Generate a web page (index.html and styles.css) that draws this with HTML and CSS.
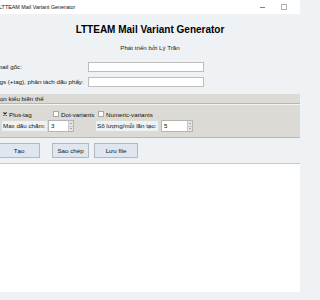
FILE: index.html
```html
<!DOCTYPE html>
<html>
<head>
<meta charset="utf-8">
<link rel="stylesheet" href="styles.css">
</head>
<body>
<div class="titlebar">
  <span class="title">LTTEAM Mail Variant Generator</span>
  <span class="controls"><span class="min"></span><span class="max"></span></span>
</div>
<main class="app">
  <h1 class="heading">LTTEAM Mail Variant Generator</h1>
  <p class="sub">Phát triển bởi Lý Trần</p>
  <div class="form">
    <label class="flabel">Email gốc:</label>
    <div class="entry"></div>
    <label class="flabel">Tags (+tag), phân tách dấu phẩy:</label>
    <div class="entry"></div>
  </div>
  <section class="group">
    <div class="legend">Chọn kiểu biến thể</div>
    <div class="inner">
      <div class="checks">
        <span class="opt opt-plus"><svg class="tick" width="4" height="4" viewBox="0 0 4 4"><path d="M0.4 0.4 L3.6 3.6 M3.6 0.4 L0.4 3.6" stroke="#222" stroke-width="1.1" fill="none"/></svg>Plus-tag</span>
        <span class="opt opt-dot"><span class="box"></span>Dot-variants</span>
        <span class="opt"><span class="box"></span>Numeric-variants</span>
      </div>
      <div class="spins">
        <span class="slabel slabel1">Max dấu chấm:</span>
        <span class="spin spin1"><span class="val">3</span><span class="arrows"><span class="up"></span><span class="down"></span></span></span>
        <span class="slabel slabel2">Số lượng/mỗi lần tạo:</span>
        <span class="spin spin2"><span class="val">5</span><span class="arrows"><span class="up"></span><span class="down"></span></span></span>
      </div>
    </div>
  </section>
  <div class="buttons">
    <button class="btn btn-create">Tạo</button>
    <button class="btn btn-copy">Sao chép</button>
    <button class="btn btn-save">Lưu file</button>
  </div>
  <div class="output"></div>
  <div class="footer"></div>
</main>
</body>
</html>
```
FILE: styles.css
```css
html, body {
  margin: 0;
  padding: 0;
  width: 300px;
  height: 300px;
  overflow: hidden;
  background: #eff2f5;
  font-family: "Liberation Sans", Arial, sans-serif;
  color: #111;
}
.titlebar {
  height: 14px;
  background: #ffffff;
  display: flex;
  align-items: center;
  justify-content: space-between;
}
.title {
  font-size: 5.4px;
  margin-left: -1px;
  color: #111;
}
.controls {
  display: flex;
  align-items: center;
  margin-right: 13px;
}
.min {
  width: 5px;
  height: 1px;
  background: #808080;
  margin-right: 16px;
}
.max {
  width: 4px;
  height: 4px;
  border: 1px solid #b0b0b0;
}
.app {
  display: flex;
  flex-direction: column;
}
.heading {
  margin: 10px 0 0;
  font-size: 10px;
  line-height: 12px;
  font-weight: bold;
  text-align: center;
  color: #000;
}
.sub {
  margin: 8px 0 0;
  font-size: 6.2px;
  line-height: 8px;
  text-align: center;
  color: #222;
}
.form {
  margin: 10px 0 0 -7px;
  display: grid;
  grid-template-columns: 95px 116px;
  row-gap: 5px;
  align-items: center;
}
.flabel {
  font-size: 6.2px;
  line-height: 10px;
  color: #111;
  white-space: nowrap;
}
.entry {
  height: 8px;
  background: #ffffff;
  border: 1px solid #bdbdbd;
}
.group {
  margin-top: 7px;
  background: #dcdad5;
}
.legend {
  height: 9px;
  line-height: 9px;
  font-size: 6.2px;
  margin-left: -8px;
  color: #111;
}
.inner {
  border-top: 1px solid #b9b7b2;
  box-shadow: inset 0 1px 0 #f4f3f1;
  border-bottom: 1px solid #b9b7b2;
  padding: 6px 0 5px 2px;
  display: flex;
  flex-direction: column;
  gap: 2px;
}
.checks {
  display: flex;
  align-items: center;
  height: 8px;
  font-size: 6.2px;
}
.opt {
  display: flex;
  align-items: center;
  white-space: nowrap;
}
.opt-plus { width: 51px; }
.opt-dot { width: 45px; }
.tick {
  margin: 0 2px 0 1px;
}
.box {
  width: 4px;
  height: 4px;
  background: #fff;
  border: 1px solid #a8a8a8;
  margin-right: 2px;
}
.spins {
  display: flex;
  align-items: center;
  height: 12px;
  font-size: 6.2px;
}
.slabel {
  background: #eff2f5;
  height: 10px;
  line-height: 10px;
  white-space: nowrap;
  box-sizing: border-box;
  padding-left: 1px;
}
.slabel1 { width: 45px; }
.slabel2 { width: 62px; margin-left: 22px; }
.spin {
  height: 12px;
  box-sizing: border-box;
  background: #fff;
  border: 1px solid #b5b5b5;
  display: flex;
  justify-content: space-between;
}
.spin1 { width: 26px; margin-left: 1px; }
.spin2 { width: 32px; margin-left: 3px; }
.val {
  line-height: 9px;
  padding-left: 2px;
}
.arrows {
  width: 4px;
  display: flex;
  flex-direction: column;
  background: #e4e4e4;
  border-left: 1px solid #c8c8c8;
}
.up, .down {
  flex: 1;
  position: relative;
}
.up { border-bottom: 1px solid #c8c8c8; }
.up::after, .down::after {
  content: "";
  position: absolute;
  left: 1px;
  top: 2px;
  border-left: 1px solid transparent;
  border-right: 1px solid transparent;
}
.up::after { border-bottom: 1px solid #666; }
.down::after { border-top: 1px solid #666; top: 1px; }
.buttons {
  display: flex;
  margin-top: 5px;
  height: 15px;
}
.btn {
  height: 15px;
  padding: 0;
  font-family: "Liberation Sans", Arial, sans-serif;
  font-size: 6.2px;
  color: #111;
  background: #dfe6f0;
  border: 1px solid #b3b8c0;
  border-radius: 0;
}
.btn-create { width: 42px; margin-left: -2px; }
.btn-copy { width: 37px; margin-left: 12px; }
.btn-save { width: 44px; margin-left: 5px; }
.output {
  margin-top: 5px;
  height: 128px;
  background: #ffffff;
  border-top: 1px solid #c9c9c9;
}
.footer {
  height: 7px;
  background: #eff2f5;
}
```
